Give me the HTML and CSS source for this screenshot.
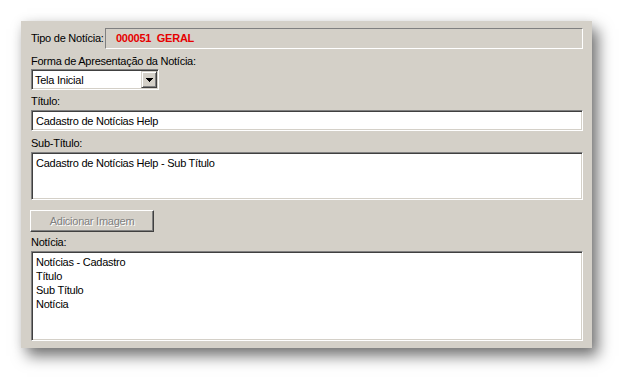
FILE: index.html
```html
<!DOCTYPE html>
<html lang="pt-BR">
<head>
  <meta charset="UTF-8">
  <title>Cadastro de Notícias</title>
  <link rel="stylesheet" href="styles.css">
</head>
<body>
  <div class="panel">
    <div class="row-tipo">
      <span class="lbl tipo-lbl">Tipo de Notícia:</span>
      <div class="static">000051&nbsp;&nbsp;GERAL</div>
    </div>

    <label class="lbl lbl-forma">Forma de Apresentação da Notícia:</label>
    <div class="combo">
      <span class="combo-text">Tela Inicial</span>
      <span class="drop">
        <svg width="7" height="4" viewBox="0 0 7 4"><path d="M0 0h7v1H0zM1 1h5v1H1zM2 2h3v1H2zM3 3h1v1H3z" fill="#000"/></svg>
      </span>
    </div>

    <label class="lbl lbl-titulo" for="titulo">Título:</label>
    <input class="field" type="text" id="titulo" value="Cadastro de Notícias Help">

    <label class="lbl lbl-sub" for="subtitulo">Sub-Título:</label>
    <textarea class="field area-sub" id="subtitulo">Cadastro de Notícias Help - Sub Título</textarea>

    <button class="btn" disabled>Adicionar Imagem</button>

    <label class="lbl lbl-noticia" for="noticia">Notícia:</label>
    <textarea class="field area-noticia" id="noticia">Notícias - Cadastro
Título
Sub Título
Notícia</textarea>
  </div>
</body>
</html>
```

FILE: styles.css
```css
html, body {
  min-height: 100%;
  height: 100%;
}

body {
  margin: 0;
  padding: 21px 0 0 21px;
  box-sizing: border-box;
  background-color: #fff;
  font-family: "Liberation Sans", Arial, sans-serif;
  font-size: 11px;
  letter-spacing: -0.25px;
  color: #000;
}

.panel {
  box-sizing: border-box;
  width: 571px;
  height: 327px;
  padding: 7px 9px 7px 10px;
  background-color: #d4d0c8;
  display: flex;
  flex-direction: column;
  box-shadow: 6px 8px 14px rgba(0, 0, 0, 0.55), 0 0 10px rgba(0, 0, 0, 0.06);
}

.lbl {
  display: block;
  line-height: 13px;
  height: 13px;
}

.row-tipo {
  display: flex;
  align-items: center;
  height: 21px;
}

.tipo-lbl {
  width: 74px;
  flex: none;
}

.static {
  flex: 1;
  box-sizing: border-box;
  height: 21px;
  line-height: 19px;
  padding-left: 10px;
  border: 1px solid;
  border-color: #808080 #fff #fff #808080;
  color: #e60000;
  font-weight: bold;
}

.lbl-forma { margin-top: 6px; }
.lbl-titulo { margin-top: 5px; }
.lbl-sub { margin-top: 6px; }
.lbl-noticia { margin-top: 4px; }

.combo {
  box-sizing: border-box;
  width: 128px;
  height: 21px;
  margin-top: 1px;
  padding: 1px;
  display: flex;
  align-items: center;
  background-color: #fff;
  border: 1px solid;
  border-color: #808080 #fff #fff #808080;
  box-shadow: inset 1px 1px #404040, inset -1px -1px #d4d0c8;
}

.combo-text {
  flex: 1;
  padding-left: 2px;
}

.drop {
  box-sizing: border-box;
  width: 16px;
  height: 17px;
  display: flex;
  align-items: center;
  justify-content: center;
  background-color: #d4d0c8;
  border: 1px solid;
  border-color: #d4d0c8 #404040 #404040 #d4d0c8;
  box-shadow: inset 1px 1px #fff, inset -1px -1px #808080;
}

.field {
  box-sizing: border-box;
  width: 100%;
  margin: 2px 0 0 0;
  background-color: #fff;
  border: 1px solid;
  border-color: #808080 #fff #fff #808080;
  box-shadow: inset 1px 1px #404040, inset -1px -1px #d4d0c8;
  font-family: inherit;
  font-size: 11px;
  letter-spacing: -0.25px;
  color: #000;
  outline: none;
}

input.field {
  height: 21px;
  padding: 0 4px;
}

textarea.field {
  resize: none;
  overflow: hidden;
  padding: 3px 4px;
  line-height: 14px;
}

.area-sub { height: 48px; }
.area-noticia { height: 90px; }

.btn {
  box-sizing: border-box;
  width: 124px;
  height: 22px;
  margin: 10px 0 0 -1px;
  padding: 0;
  background-color: #d4d0c8;
  border: 1px solid;
  border-color: #fff #404040 #404040 #fff;
  box-shadow: inset -1px -1px #808080;
  font-family: inherit;
  font-size: 11px;
  letter-spacing: -0.25px;
  color: #808080;
  text-shadow: 1px 1px #fff;
}
```
